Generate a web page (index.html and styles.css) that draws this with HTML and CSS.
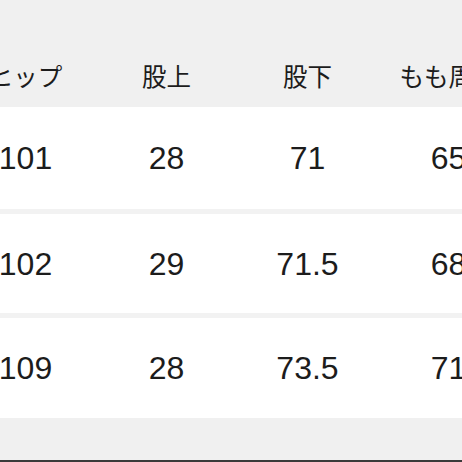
FILE: index.html
```html
<!DOCTYPE html>
<html lang="ja">
<head>
<meta charset="utf-8">
<link rel="stylesheet" href="styles.css">
</head>
<body>
<div class="sheet">
  <div class="table">
    <div class="row head">
      <div class="cell">ヒップ</div>
      <div class="cell">股上</div>
      <div class="cell">股下</div>
      <div class="cell">もも周り</div>
    </div>
    <div class="row body r1">
      <div class="cell">101</div>
      <div class="cell">28</div>
      <div class="cell">71</div>
      <div class="cell">65</div>
    </div>
    <div class="sep"></div>
    <div class="row body r2">
      <div class="cell">102</div>
      <div class="cell">29</div>
      <div class="cell">71.5</div>
      <div class="cell">68</div>
    </div>
    <div class="sep"></div>
    <div class="row body r3">
      <div class="cell">109</div>
      <div class="cell">28</div>
      <div class="cell">73.5</div>
      <div class="cell">71</div>
    </div>
  </div>
  <div class="foot"></div>
  <div class="edge"></div>
</div>
</body>
</html>
```

FILE: styles.css
```css
html, body {
  margin: 0;
  padding: 0;
  background: #f0f0f0;
}
.sheet {
  width: 462px;
  height: 462px;
  overflow: hidden;
  display: flex;
  flex-direction: column;
  background: #f0f0f0;
  color: #1c1c1c;
}
.table {
  display: flex;
  flex-direction: column;
  margin-left: -45px;
  flex-shrink: 0;
}
.row {
  display: flex;
  flex-shrink: 0;
}
.cell {
  width: 141px;
  flex-shrink: 0;
  text-align: center;
  white-space: nowrap;
}
.head {
  background: #f0f0f0;
  height: 107px;
  box-sizing: border-box;
  padding-top: 59px;
  align-items: flex-start;
}
.head .cell {
  font-family: "Noto Sans CJK JP", "Noto Sans", sans-serif;
  font-weight: 400;
  font-size: 24.5px;
  line-height: 34px;
}
.body {
  background: #ffffff;
  align-items: center;
}
.r1 { height: 102px; }
.r2 { height: 99px; }
.r3 { height: 100px; }
.body .cell {
  font-family: "Liberation Sans", Arial, sans-serif;
  font-size: 32px;
  line-height: 36px;
}
.sep {
  height: 5px;
  background: #f2f2f2;
  flex-shrink: 0;
}
.foot {
  height: 42px;
  background: #f0f0f0;
  flex-shrink: 0;
}
.edge {
  height: 2px;
  background: #3a3a3a;
  flex-shrink: 0;
}
```
